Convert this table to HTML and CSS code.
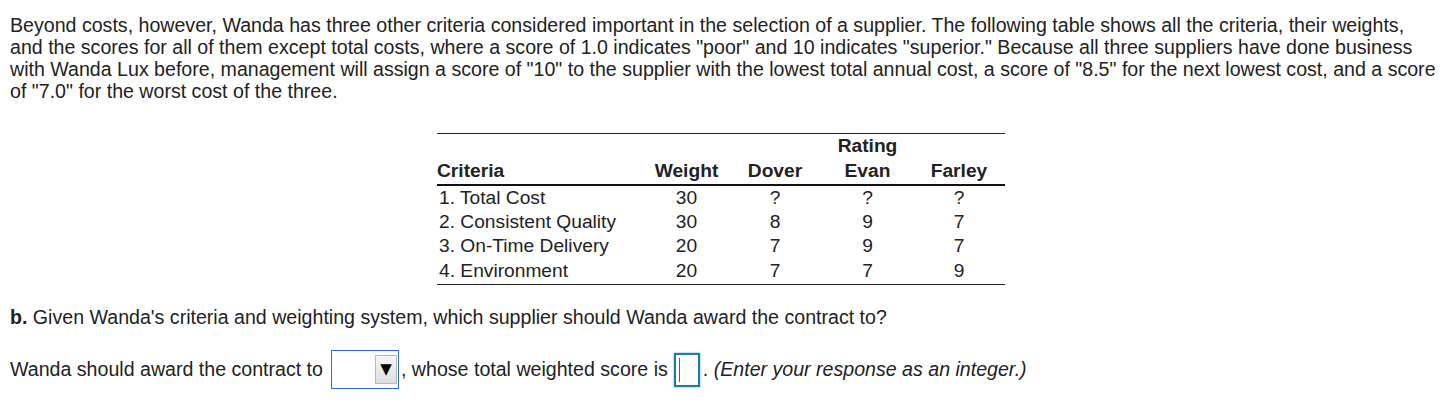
FILE: index.html
```html
<!DOCTYPE html>
<html>
<head>
<meta charset="utf-8">
<link rel="stylesheet" href="styles.css">
</head>
<body>
<div class="page">
  <p class="intro">Beyond costs, however, Wanda has three other criteria considered important in the selection of a supplier. The following table shows all the criteria, their weights, and the scores for all of them except total costs, where a score of 1.0 indicates "poor" and 10 indicates "superior." Because all three suppliers have done business with Wanda Lux before, management will assign a score of "10" to the supplier with the lowest total annual cost, a score of "8.5" for the next lowest cost, and a score of "7.0" for the worst cost of the three.</p>
  <div class="table-wrap">
    <table class="crit">
      <colgroup>
        <col class="c-name"><col class="c-w"><col class="c-d"><col class="c-e"><col class="c-f">
      </colgroup>
      <thead>
        <tr class="top"><th></th><th></th><th></th><th class="ctr">Rating</th><th></th></tr>
        <tr class="hdr"><th class="left">Criteria</th><th class="ctr">Weight</th><th class="ctr">Dover</th><th class="ctr">Evan</th><th class="ctr">Farley</th></tr>
      </thead>
      <tbody>
        <tr><td>1. Total Cost</td><td class="ctr">30</td><td class="ctr">?</td><td class="ctr">?</td><td class="ctr">?</td></tr>
        <tr><td>2. Consistent Quality</td><td class="ctr">30</td><td class="ctr">8</td><td class="ctr">9</td><td class="ctr">7</td></tr>
        <tr><td>3. On-Time Delivery</td><td class="ctr">20</td><td class="ctr">7</td><td class="ctr">9</td><td class="ctr">7</td></tr>
        <tr class="last"><td>4. Environment</td><td class="ctr">20</td><td class="ctr">7</td><td class="ctr">7</td><td class="ctr">9</td></tr>
      </tbody>
    </table>
  </div>
  <p class="question"><b>b.</b> Given Wanda's criteria and weighting system, which supplier should Wanda award the contract to?</p>
  <div class="answer">
    <span>Wanda should award the contract to</span>
    <span class="select"><span class="arrow">&#9660;</span></span>
    <span class="after">, whose total weighted score is</span>
    <span class="input"><span class="caret"></span></span>
    <span class="note">. <i>(Enter your response as an integer.)</i></span>
  </div>
</div>
</body>
</html>
```
FILE: styles.css
```css
html, body { margin: 0; padding: 0; background: #fff; }
body { font-family: "Liberation Sans", Arial, sans-serif; font-size: 19.6px; color: #222; }
.page { padding: 14px 1px 0 10px; }
.intro { margin: 0; line-height: 22px; }
.table-wrap { padding-top: 31px; padding-left: 427px; }
.crit { border-collapse: collapse; width: 568px; font-size: 19.2px; }
.c-name { width: 208px; }
.c-w { width: 83px; }
.c-d { width: 94px; }
.c-e { width: 91px; }
.c-f { width: 92px; }
.crit th { font-weight: bold; padding: 0; }
.crit .top th { border-top: 1px solid #222; height: 24px; padding: 0; vertical-align: middle; line-height: 22px; }
.crit .hdr th { border-bottom: 2px solid #111; height: 25px; line-height: 22px; vertical-align: middle; padding: 0 0 1px 0; }
.crit td { padding: 0 0 0 2px; height: 24px; line-height: 22px; vertical-align: middle; }
.crit .left { text-align: left; padding-left: 2px; }
.crit .ctr { text-align: center; }
.crit td.ctr { padding-left: 0; }
.crit .last td { border-bottom: 1px solid #222; height: 25px; padding-bottom: 1px; }
.question { margin: 21px 0 0 0; line-height: 22px; }
.answer { margin-top: 21px; display: flex; align-items: center; height: 41px; }
.select { margin-left: 8px; width: 65px; height: 37px; border: 1px solid #2b6fd6; display: flex; align-items: center; justify-content: flex-end; padding-right: 1px; box-sizing: content-box; }
.arrow { width: 20px; height: 27px; background: linear-gradient(#f6f6f6, #dedede); border: 1px solid #b8b8b8; font-family: "DejaVu Sans", sans-serif; font-size: 15px; line-height: 27px; text-align: center; color: #000; box-sizing: content-box; }
.after { margin-left: 2px; }
.input { margin-left: 6px; width: 19px; height: 30px; border: 2px solid #1e7d9a; box-shadow: 0 0 2px #5aa6c0; display: flex; align-items: center; padding-left: 3px; box-sizing: content-box; }
.caret { width: 1px; height: 24px; background: #2b5fd6; }
.note { margin-left: 3px; }
```
